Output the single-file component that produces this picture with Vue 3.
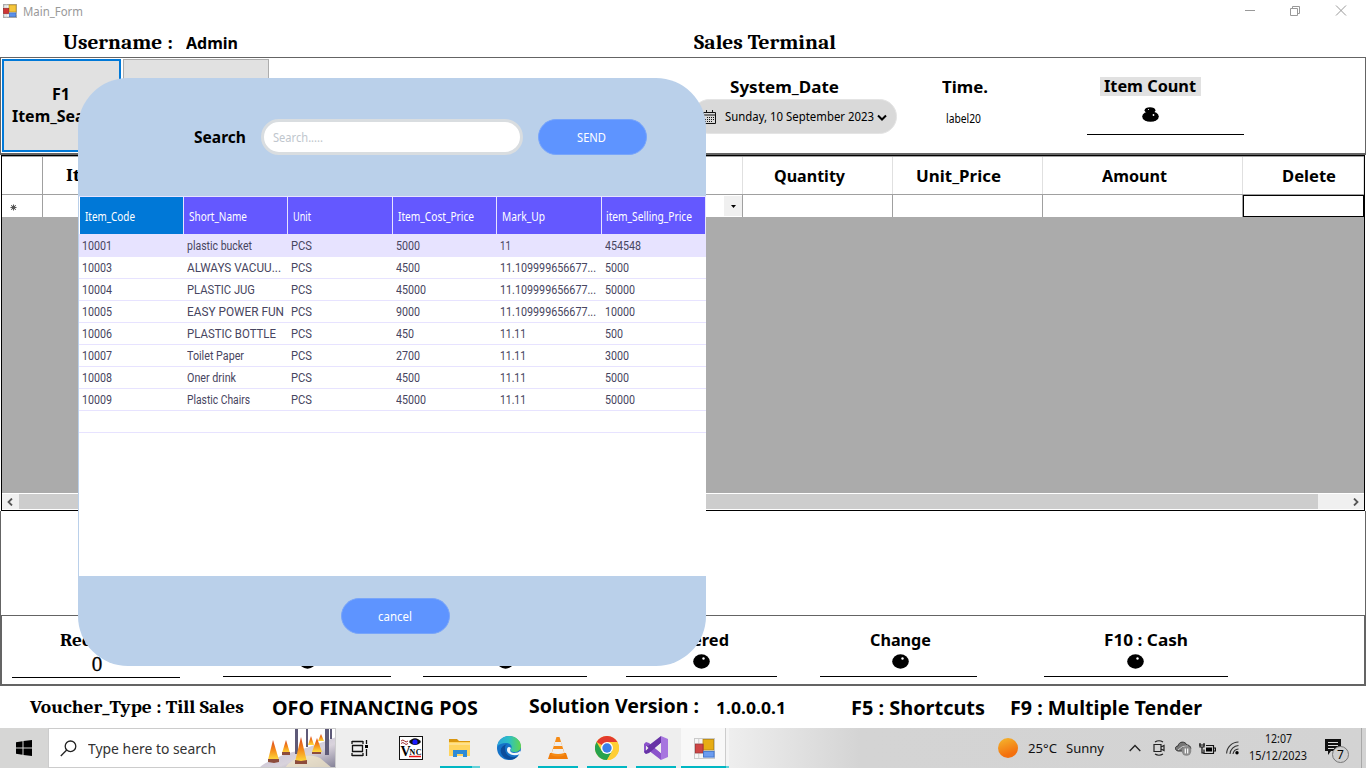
<script setup>
// Stretches a label horizontally to the given width in pixels.
const vFit = {
  mounted(el, { value }) {
    const natural = el.getBoundingClientRect().width
    el.style.width = value + 'px'
    el.style.transform = `scaleX(${value / natural})`
  }
}

const columns = [
  ['Item_Code', 50], ['Short_Name', 58], ['Unit', 18],
  ['Item_Cost_Price', 76], ['Mark_Up', 43], ['item_Selling_Price', 86]
]
const long = ['11.109999656677...', 96]
const digits = (s) => [s, s.length * 6]
const rows = [
  ['10001', ['plastic bucket', 65], '5000', ['11', 11], '454548'],
  ['10003', ['ALWAYS VACUU...', 94], '4500', long, '5000'],
  ['10004', ['PLASTIC JUG', 68], '45000', long, '50000'],
  ['10005', ['EASY POWER FUN', 97], '9000', long, '10000'],
  ['10006', ['PLASTIC BOTTLE', 89], '450', ['11.11', 26], '500'],
  ['10007', ['Toilet Paper', 57], '2700', ['11.11', 26], '3000'],
  ['10008', ['Oner drink', 49], '4500', ['11.11', 26], '5000'],
  ['10009', ['Plastic Chairs', 63], '45000', ['11.11', 26], '50000']
].map(([code, name, cost, mark, sell]) => [digits(code), name, ['PCS', 21], digits(cost), mark, digits(sell)])

const flames = [
  'M9 32L14 12 20 32z', 'M23 25L27 12 31 25z', 'M36 34L42 9 48 34z',
  'M53 24L58 10 63 24z', 'M49 17L52 8 55 17z', 'M59 13L62 6 65 13z'
]
</script>

<template>
  <div class="screen">
    <div class="titlebar">
      <svg class="appicon" viewBox="0 0 22 22"><rect x="1" y="1" width="20" height="20" fill="#f4f4f4" stroke="#aaa" stroke-width="2" /><path d="M0 6h9M5 0v22M0 16h22" stroke="#ccc" /><rect x="9.500" y="1.500" width="11" height="11" fill="#f5c63c" stroke="#bd8b10" /><rect x="1" y="7" width="8" height="8" fill="#cf3434" stroke="#991f1f" /><rect x="10" y="14" width="10" height="6" fill="#5b91ec" stroke="#3768bb" /></svg>
      <span v-fit="60" class="t apptitle">Main_Form</span>
      <svg class="winbtns" viewBox="0 0 106 14"><path d="M2 7.500h10M47.500 5.500h7v7h-7zM49.500 5.500v-2h7v7h-2M93 2.500l10 10M103 2.500l-10 10" fill="none" stroke="#999" /></svg>
    </div>

    <div class="heading">
      <span v-fit="110" class="t serif big">Username :</span>
      <span v-fit="52" class="t bold admin">Admin</span>
      <span v-fit="142" class="t serif big terminal">Sales Terminal</span>
    </div>

    <div class="toolpanel">
      <button class="tool focus"><span v-fit="18" class="t bold">F1</span><span v-fit="98" class="t bold">Item_Search</span></button>
      <button class="tool second"></button>
      <div class="field date">
        <span v-fit="109" class="t bold">System_Date</span>
        <div class="pill">
          <svg class="cal" viewBox="0 0 13 14"><path d="M.5 2.500h12v11H.5zM.5 5h12M3.500 0v3M9.500 0v3" fill="none" stroke="#111" /><path d="M4 7.500h7M2 9.500h9M2 11.500h7" stroke="#111" stroke-dasharray="1 1" /></svg>
          <span v-fit="149" class="t small">Sunday, 10 September 2023</span>
          <svg class="down" viewBox="0 0 10 8"><path d="M1 1.500l4 4 4-4" fill="none" stroke="#000" stroke-width="2" /></svg>
        </div>
      </div>
      <div class="field time">
        <span v-fit="46" class="t bold">Time.</span>
        <span v-fit="35" class="t small lab">label20</span>
      </div>
      <div class="field count">
        <span class="tag"><span v-fit="92" class="t bold">Item Count</span></span>
        <svg class="bag" viewBox="0 0 17 15"><ellipse cx="8" cy="3.300" rx="5.400" ry="3.100" /><ellipse cx="8.500" cy="9.500" rx="8.300" ry="5.300" /><circle cx="6.500" cy="2.500" r=".6" fill="#fff" /><circle cx="11.500" cy="8" r=".9" fill="#fff" /></svg>
      </div>
    </div>

    <div class="sheet">
      <div class="srow shead">
        <span></span>
        <span class="first"><span v-fit="90" class="t serif itemcode">Item_Code</span></span>
        <span><span v-fit="71" class="t bold qty">Quantity</span></span>
        <span><span v-fit="85" class="t bold price">Unit_Price</span></span>
        <span><span v-fit="65" class="t bold amt">Amount</span></span>
        <span><span v-fit="54" class="t bold del">Delete</span></span>
      </div>
      <div class="srow sbody">
        <span class="star"><svg viewBox="0 0 7 7"><circle cx="3.500" cy="3.500" r="2" fill="#444" /><path d="M3.500 .5v6M.5 3.500h6M1.200 1.200l4.600 4.600M5.800 1.200l-4.600 4.600" stroke="#555" /></svg></span>
        <span class="combo"><span class="arrow"><svg viewBox="0 0 5 3"><path d="M0 0h5L2.500 3z" /></svg></span></span>
        <span></span><span></span><span></span><span class="cur"></span>
      </div>
      <div class="void"></div>
      <div class="scroll">
        <svg viewBox="0 0 8 8"><path d="M6 .5L2.500 4 6 7.500" fill="none" stroke="#555" stroke-width="1.800" /></svg>
        <i></i>
        <svg viewBox="0 0 8 8"><path d="M2 .5L5.500 4 2 7.500" fill="none" stroke="#555" stroke-width="1.800" /></svg>
      </div>
    </div>

    <div class="blank"></div>

    <div class="totals">
      <div class="total a"><span v-fit="74" class="t serif">Receipt :</span><span v-fit="10" class="t serif zero">0</span></div>
      <div class="total b"><svg class="blob" viewBox="0 0 17 15"><ellipse cx="8.500" cy="7.500" rx="8.300" ry="7.200" /></svg></div>
      <div class="total c3"><svg class="blob" viewBox="0 0 17 15"><ellipse cx="8.500" cy="7.500" rx="8.300" ry="7.200" /></svg></div>
      <div class="total d"><span v-fit="76" class="t bold tend">Tendered</span><svg class="blob" viewBox="0 0 17 15"><ellipse cx="8.500" cy="7.500" rx="8.300" ry="7.200" /><circle cx="10.500" cy="4.500" r="1.200" fill="#fff" /></svg></div>
      <div class="total e"><span v-fit="61" class="t bold change">Change</span><svg class="blob" viewBox="0 0 17 15"><ellipse cx="8.500" cy="7.500" rx="8.300" ry="7.200" /><circle cx="10.500" cy="4.500" r="1.200" fill="#fff" /></svg></div>
      <div class="total f"><span v-fit="84" class="t bold cash">F10 : Cash</span><svg class="blob" viewBox="0 0 17 15"><ellipse cx="8.500" cy="7.500" rx="8.300" ry="7.200" /><circle cx="10.500" cy="4.500" r="1.200" fill="#fff" /></svg></div>
    </div>

    <div class="status">
      <span v-fit="214" class="t serif vt">Voucher_Type : Till Sales</span>
      <span v-fit="206" class="t bold lg">OFO FINANCING POS</span>
      <span v-fit="170" class="t bold lg up">Solution Version :</span>
      <span v-fit="70" class="t bold md">1.0.0.0.1</span>
      <span v-fit="134" class="t bold lg">F5 : Shortcuts</span>
      <span v-fit="192" class="t bold lg">F9 : Multiple Tender</span>
    </div>

    <div class="taskbar">
      <div class="start"><svg viewBox="0 0 16 16"><path d="M0 2.300L6.500 1.300V7.500H0zM7.500 1.100L16 0V7.500H7.500zM0 8.500H6.500V14.700L0 13.700zM7.500 8.500H16V16L7.500 14.900z" /></svg></div>
      <div class="find">
        <svg class="mag" viewBox="0 0 17 17"><circle cx="10.500" cy="6.300" r="5.300" fill="none" stroke="#222" stroke-width="1.300" /><path d="M6.700 10L.8 16" stroke="#222" stroke-width="1.300" /></svg>
        <span v-fit="128" class="t">Type here to search</span>
        <svg class="scene" viewBox="0 0 77 40">
          <defs>
            <linearGradient id="fl" x1="0" y1="0" x2="0" y2="1"><stop offset="0" stop-color="#d9451f" /><stop offset=".5" stop-color="#f58a1a" /><stop offset="1" stop-color="#ffdc3d" /></linearGradient>
            <linearGradient id="snow" x1="0" y1="0" x2="1" y2="1"><stop offset="0" stop-color="#b9b5cf" /><stop offset=".6" stop-color="#d9d3dc" /><stop offset="1" stop-color="#807d94" /></linearGradient>
          </defs>
          <path d="M0 40C6 34 14 32 24 27C36 23 46 21 77 9V40z" fill="url(#snow)" />
          <path d="M26 40C33 29 50 24 61 30L73 40z" fill="#eee3c8" opacity=".8" />
          <path d="M36 0h3v26h-3zM47 0h2v19h-2zM66 0h4v27h-4zM71 0h2v11h-2z" fill="#5e5a78" />
          <path v-for="d in flames" :key="d" :d="d" fill="url(#fl)" />
          <path d="M9 31h11v3l-5 1-6-1zM23 24h8v3h-8zM36 32l6 1 6-1v4H36zM53 24h9v2h-9z" fill="#8d4c3b" />
        </svg>
      </div>

      <div class="app tv"><svg viewBox="0 0 17 17"><path d="M1 1v3M12 1v3M1 1.500h11M1 13v3M12 13v3M1 15.500h11M1.500 5.500h10v6h-10zM15.500 0v4M15.500 9v7" fill="none" stroke="#111" stroke-width="1.300" /><rect x="14" y="5" width="3" height="3" /></svg></div>
      <div class="app vnc"><svg viewBox="0 0 24 24"><rect x=".5" y=".5" width="23" height="23" fill="#fff" stroke="#111" /><path d="M10 6c3-5 9-5 12 0-3 4-9 4-12 0z" fill="#111" /><circle cx="16" cy="6" r="2.600" fill="#1a1aff" /><path d="M2 5q2-2 3.500 0T9 5M2 7.500q2-2 3.500 0T9 7.500" fill="none" stroke="#9b2525" /><text x="1.500" y="20" font-size="14" font-weight="bold" font-family="Liberation Serif, serif">V</text><text x="10.500" y="19" font-size="8" font-weight="bold" font-family="Liberation Serif, serif" textLength="12">NC</text><path d="M10 20.500h12" stroke="#e11" stroke-width="1.500" /></svg></div>
      <div class="app line more"><svg viewBox="0 0 24 24"><path d="M1 3h8l2 2h11v4H1z" fill="#d9960f" /><path d="M1 6h21v14H1z" fill="#ffd45e" /><path d="M1 7h21v2H1z" fill="#ffe08b" /><path d="M5 21v-7h14v7h-4v-3H9v3z" fill="#2e8bd6" /></svg></div>
      <div class="app"><svg viewBox="0 0 24 24"><defs><linearGradient id="ed" x1="0" y1="0" x2="1" y2="0"><stop offset="0" stop-color="#2aa3dd" /><stop offset=".5" stop-color="#2dc0c4" /><stop offset="1" stop-color="#62d64b" /></linearGradient></defs><circle cx="12" cy="12" r="12" fill="#1573c8" /><path d="M0 11C1 4 6 0 12 0c7 0 12 5 12 10 0 4-3 6-7 6-3 0-4-1-3-3 2-3-1-6-5-6-4 0-7 1-9 4z" fill="url(#ed)" /><path d="M8 12c0 8 7 11 13 8-4 5-12 5-16-1-3-5-1-9 5-11-2 1-2 3-2 4z" fill="#0c4d9b" /><path d="M14 12c-2 3 0 5 3 5 3 0 5-1 6-2 1 1 1 1 0 3-6 3-13 0-13-4 0-3 2-4 4-2z" fill="#f2f6f9" /></svg></div>
      <div class="app line"><svg viewBox="0 0 24 24"><path d="M4 17h16l2 6H2z" fill="#f07c0a" /><path d="M10.500 1h3L19 19q-7 3-14 0z" fill="#f68b15" /><path d="M9 6h6l1.200 4H7.800zM7 13h10l1.200 4q-6 2-12.400 0z" fill="#eee" /></svg></div>
      <div class="app line"><svg viewBox="0 0 24 24"><circle cx="12" cy="12" r="12" fill="#ffce35" /><path d="M12 12L1.600 6A12 12 0 0 1 22.400 6z" fill="#e33b2e" /><path d="M1.600 6A12 12 0 0 0 12 24l5.200-9L12 12 6.800 15z" fill="#27a34d" /><path d="M12 6h10.400A12 12 0 0 1 12 24l5.200-9z" fill="#ffce35" /><circle cx="12" cy="12" r="6" fill="#fff" /><circle cx="12" cy="12" r="4.700" fill="#3b7fe8" /></svg></div>
      <div class="app line"><svg viewBox="0 0 24 24"><path d="M17 24l7-3V3l-7-3z" fill="#a776df" /><path d="M0 8l2-2 3 1 12 10v7L4 14l-2 4-2-2z" fill="#8b53cb" /><path d="M0 16l2 2 3-1L17 7V0L4 10 2 9v5z" fill="#6733a6" /><path d="M2 9.500v5L4.500 12zM17 7v10l-6-5z" fill="#eee" /></svg></div>
      <div class="app line active"><svg viewBox="0 0 22 22"><rect x=".5" y=".5" width="21" height="21" fill="#f6f6f6" stroke="#c8c8c8" /><path d="M0 6h9M5 0v22M0 16h22" stroke="#ccc" /><rect x="9.500" y="1.500" width="11" height="11" fill="#e7ac13" stroke="#bd8b10" /><rect x="1.500" y="6.500" width="8" height="9" fill="#cf4545" stroke="#a33" /><rect x="10" y="14" width="11" height="6" fill="#6b9cf0" stroke="#3f74ca" /></svg></div>

      <div class="tray">
        <span class="sun"></span>
        <span v-fit="29" class="t deg">25°C</span>
        <span v-fit="38" class="t sunny">Sunny</span>
        <svg class="chev" viewBox="0 0 12 8"><path d="M.7 7L6 1.500 11.300 7" fill="none" stroke="#222" stroke-width="1.300" /></svg>
        <svg class="meet" viewBox="0 0 12 16"><path d="M2 2q4-2.500 8 0M2 14q4 2.500 8 0M1 4.500h7v7H1zM8 7l3-1.500v5L8 9" fill="none" stroke="#222" stroke-width="1.200" /></svg>
        <svg class="cloud" viewBox="0 0 17 15"><path d="M3 10C-1 9 0 5 3 5 4 0 10 0 12 4c4 0 5 5 2 6z" fill="#777" stroke="#333" /><path d="M3 9q4-5 10-4" fill="none" stroke="#ccc" /><circle cx="11.500" cy="10" r="4.800" fill="#8b8b8b" /><path d="M10.300 7.500v5M12.700 7.500v5" stroke="#fff" stroke-width="1.200" /></svg>
        <svg class="bat" viewBox="0 0 17 13"><path d="M1 1v4h4V1M0 3h6M3 5v6h2M7 3.500h7.500v8H5v-4M15 6h1.500v3H15" fill="none" stroke="#111" stroke-width="1.200" /><rect x="7" y="5.500" width="6" height="4" /></svg>
        <svg class="wifi" viewBox="0 0 13 14"><path d="M.6 12.500A12 12 0 0 1 12.500 1M4 13A9 9 0 0 1 12.500 4.500M7 13a6 6 0 0 1 5.500-5" fill="none" stroke="#333" stroke-width="1.100" /><circle cx="11" cy="11.800" r="1.700" /></svg>
        <div class="clock"><span v-fit="27" class="t">12:07</span><span v-fit="58" class="t">15/12/2023</span></div>
        <svg class="note" viewBox="0 0 25 25"><path d="M0 0h16v12H6l-3 4v-4H0z" fill="#111" /><path d="M3 3.500h10M3 6.500h10M3 9.500h6" stroke="#ddd" /><circle cx="15.500" cy="15.500" r="8" fill="#cfcfcf" stroke="#777" /><text x="15.500" y="20" text-anchor="middle" font-size="12" font-family="Noto Sans, sans-serif">7</text></svg>
        <i class="peek"></i>
      </div>
    </div>

    <div class="dialog">
      <div class="dtop">
        <span v-fit="52" class="t bold lbl">Search</span>
        <div class="input"><span v-fit="50" class="t">Search.....</span></div>
        <button class="blue"><span v-fit="29" class="t">SEND</span></button>
      </div>
      <div class="dgrid">
        <div class="dr dh"><span v-for="c in columns" :key="c[0]"><b v-fit="c[1]" class="t">{{ c[0] }}</b></span></div>
        <div v-for="(r, i) in rows" :key="i" class="dr"><span v-for="(c, j) in r" :key="j"><b v-fit="c[1]" class="t">{{ c[0] }}</b></span></div>
        <div class="dr"></div>
      </div>
      <div class="dbot"><button class="blue"><span v-fit="34" class="t">cancel</span></button></div>
    </div>
  </div>
</template>

<style>
body { background: #fff; overflow: hidden; }
</style>

<style scoped>
* { box-sizing: border-box; }
.screen { position: relative; width: 1366px; height: 768px; overflow: hidden; background: #fff; color: #000; font-family: "Noto Sans", sans-serif; display: flex; flex-direction: column; }
.screen > div { flex: none; }
svg { display: block; flex: none; }
.t { display: inline-block; flex: none; white-space: nowrap; transform-origin: 0 50%; }
.bold { font-weight: 700; font-size: 16px; line-height: 22px; }
.serif { font-family: Cambria, Caladea, "Liberation Serif", serif; font-weight: 700; font-size: 18px; line-height: 22px; }
.serif.big { font-size: 20px; }
button { border: 0; padding: 0; margin: 0; font-family: inherit; color: inherit; }

.titlebar { height: 23px; display: flex; align-items: center; padding-left: 3px; }
.appicon { width: 14px; height: 14px; margin-top: -1px; }
.apptitle { font-size: 12px; color: #999; margin-left: 6px; }
.winbtns { width: 106px; height: 14px; margin: -3px 0 0 1160px; }

.heading { height: 34px; display: flex; align-items: center; padding: 5px 0 0 63px; }
.admin { margin: 1px 0 0 13px; }
.terminal { margin-left: 456px; }

.toolpanel { height: 98px; border: 1px solid #646464; border-bottom: 2px solid #646464; display: flex; padding: 1px 0 0 1px; }
.tool { background: #e1e1e1; display: flex; flex-direction: column; align-items: center; justify-content: center; }
.focus { width: 119px; height: 93px; border: 2px solid #0078d7; padding: 0 2px 2px 0; }
.second { width: 146px; height: 93px; margin-left: 2px; border: 1px solid #adadad; }
.field { display: flex; flex-direction: column; align-items: flex-start; padding-top: 17px; }
.small { font-size: 12px; line-height: 16px; }
.date { margin-left: 423px; width: 204px; }
.date > .t { margin-left: 38px; }
.pill { width: 205px; height: 35px; margin-top: 1px; border-radius: 18px; background: #d9d9d9; border: 1px solid #e4e4e4; display: flex; align-items: center; padding-left: 10px; }
.cal { width: 13px; height: 14px; }
.pill .t { margin-left: 9px; }
.down { width: 10px; height: 8px; margin: 2px 0 0 3px; }
.time { margin-left: 47px; width: 45px; }
.time .bold { margin-left: -1px; }
.lab { margin: 13px 0 0 3px; }
.count { margin-left: 99px; width: 157px; height: 76px; border-bottom: 1px solid #000; align-items: center; padding: 18px 30px 0 0; }
.tag { background: #e1e1e1; height: 19px; width: 101px; padding-left: 4px; display: flex; align-items: center; }
.tag .t { line-height: 19px; }
.bag { width: 17px; height: 15px; margin: 11px 0 0 0; }

.sheet { height: 356px; border: 1px solid #000; margin: 0 1px; display: flex; flex-direction: column; }
.srow { display: grid; grid-template-columns: 41px 700px 150px 150px 200px 1fr; }
.shead { height: 39px; border-bottom: 1px solid #a0a0a0; border-top: 1px solid #a0a0a0; }
.shead > span { border-right: 1px solid #e0e0e0; display: flex; align-items: center; }
.shead > span:first-child { border-color: #a0a0a0; }
.first { padding-left: 23px; }
.qty { margin-left: 31px; }
.price { margin-left: 23px; }
.amt { margin-left: 59px; }
.del { margin-left: 39px; }
.sbody { height: 22px; }
.sbody > span { border-right: 1px solid #a0a0a0; }
.sbody .star { display: flex; align-items: center; padding: 2px 0 0 8px; }
.star svg { width: 7px; height: 7px; }
.sbody .combo { display: flex; justify-content: flex-end; padding: 1px 0; }
.arrow { width: 18px; height: 20px; background: #f0f0f0; display: flex; align-items: center; justify-content: center; }
.arrow svg { width: 5px; height: 3px; }
.sbody .cur { border: 1px solid #000; }
.void { flex: 1; background: #ababab; }
.scroll { height: 17px; border-top: 1px solid #fff; border-bottom: 1px solid #fff; background: #f0f0f0; display: flex; align-items: center; justify-content: space-between; padding: 0 4px; }
.scroll svg { width: 8px; height: 8px; }
.scroll i { background: #cdcdcd; height: 15px; width: 1299px; margin: 0 auto 0 5px; }
.blank { height: 104px; border: solid #646464; border-width: 0 1px; }

.totals { height: 71px; border: 1px solid #646464; border-width: 1px 2px 2px 2px; display: flex; align-items: flex-start; padding-left: 10px; }
.total { height: 61px; border-bottom: 1px solid #000; display: flex; flex-direction: column; align-items: center; padding-top: 13px; }
.total .blob { width: 17px; height: 15px; margin-top: 3px; }
.a { width: 168px; height: 62px; padding: 14px 0 0 2px; }
.zero { margin-top: 2px; font-size: 20px; font-weight: 400; -webkit-text-stroke: .3px #000; }
.b { width: 168px; margin-left: 43px; }
.total.b .blob, .total.c3 .blob { margin-top: 25px; }
.c3 { width: 164px; margin-left: 32px; }
.d { width: 151px; margin-left: 39px; }
.tend { margin-left: -22px; }
.e { width: 157px; margin-left: 43px; }
.change { margin-left: 4px; }
.e .blob { margin-left: 3px; }
.f { width: 184px; margin-left: 67px; }
.cash { margin-left: 20px; }
.f .blob { margin-left: -1px; }

.status { height: 42px; display: flex; align-items: center; padding: 1px 0 0 30px; }
.lg { font-size: 19px; margin-left: 28px; }
.up { margin-left: 51px; margin-top: -3px; }
.md { margin: 1px 36px 0 17px; }
.status .lg:last-child { margin-left: 25px; }
.status .lg:nth-child(5) { margin-left: 29px; }
.vt { margin-top: -2px; font-size: 19px; }

.taskbar { height: 40px; display: flex; background: linear-gradient(90deg, #eee 0, #eee 730px, #d4d4d4 860px, #d3d3d3 100%); }
.start { width: 48px; background: #d6d6d5; display: flex; align-items: center; justify-content: center; }
.start svg { width: 16px; height: 16px; }
.find { width: 288px; background: #fff; border: 1px solid #ccc; display: flex; align-items: center; padding-left: 11px; overflow: hidden; font-size: 14.500px; color: #333; }
.mag { width: 17px; height: 17px; }
.find .t { margin-left: 11px; }
.scene { width: 77px; height: 40px; margin-left: 43px; }
.app { width: 49px; height: 40px; display: flex; align-items: center; justify-content: center; position: relative; padding-right: 2px; }
.app svg { width: 24px; height: 24px; }
.app.tv { width: 48px; }
.app.tv svg { width: 17px; height: 17px; }
.app.vnc { width: 52px; padding: 0 0 0 2px; }
.line::after { content: ""; position: absolute; left: 4px; bottom: 0; width: 40px; height: 2px; background: #00b7c3; }
.more::after { background: linear-gradient(90deg, #00b7c3 32px, #62d2d9 32px); }
.app.active { width: 44px; background: #f8f8f8; box-shadow: 1px 0 #ccc, 4px 0 #f4f4f4; }
.app.active svg { width: 21px; height: 21px; margin-left: 4px; }
.active::after { left: 0; width: 48px; background: linear-gradient(90deg, #00b7c3 45px, #62d2d9 45px); }
.tray { margin-left: auto; width: 368px; display: flex; align-items: center; color: #111; font-size: 13px; }
.sun { width: 20px; height: 20px; border-radius: 50%; background: linear-gradient(160deg, #f4b92f, #f4700e 75%); }
.deg { margin-left: 10px; }
.sunny { margin-left: 9px; }
.chev { width: 12px; height: 8px; margin-left: 25px; }
.meet { width: 12px; height: 16px; margin-left: 12px; }
.cloud { width: 17px; height: 15px; margin-left: 10px; }
.bat { width: 17px; height: 13px; margin-left: 7px; }
.wifi { width: 13px; height: 14px; margin-left: 10px; }
.clock { width: 60px; margin: -2px 0 0 9px; display: flex; flex-direction: column; align-items: center; font-size: 12px; line-height: 17px; }
.note { width: 25px; height: 25px; margin: 6px 0 0 17px; }
.peek { width: 1px; height: 40px; background: #a8a8a8; margin-left: auto; margin-right: 4px; }

.dialog { position: absolute; left: 78px; top: 78px; width: 628px; height: 588px; border-radius: 50px; background: #bad0ea; overflow: hidden; display: flex; flex-direction: column; padding-left: 1px; }
.dtop { height: 118px; display: flex; align-items: center; padding-left: 115px; }
.input { width: 262px; height: 36px; margin-left: 15px; border: 3px solid #d9dde0; border-radius: 18px; background: #fff; font-size: 12px; color: #c0c6cd; display: flex; align-items: center; padding-left: 9px; }
.blue { width: 109px; height: 36px; border-radius: 18px; background: #5e94ff; border: 1px solid #78a5fa; color: #fff; font-size: 12px; display: flex; align-items: center; justify-content: center; }
.dtop .blue { margin-left: 15px; padding-right: 2px; }
.dgrid { height: 380px; background: #fff; color: #474560; font-family: Roboto, sans-serif; font-size: 12.500px; border-top: 1px solid #e7e3ff; }
.dr { display: grid; grid-template-columns: 105px 104px 105px 104px 105px 104px; height: 22px; border-bottom: 1px solid #e7e3ff; }
.dr > span { display: flex; align-items: center; padding: 0 0 1px 3px; }
.dr b { font-weight: 400; }
.dh { height: 37px; color: #fff; border-bottom: 0; padding-left: 1px; font-family: "Noto Sans", sans-serif; font-size: 12px; grid-template-columns: 104px 104px 105px 104px 105px 104px; }
.dh > span { background: #6458ff; border-right: 1px solid #e7e3ff; padding: 1px 0 0 5px; }
.dh > span:first-child { background: #0078d7; }
.dh > span:last-child { padding-left: 4px; }
.dh + .dr { background: #e7e3ff; height: 23px; }
.dh + .dr > span { padding: 1px 0 0 3px; }
.dbot { flex: 1; display: flex; justify-content: center; padding: 22px 0 0 5px; }
</style>
